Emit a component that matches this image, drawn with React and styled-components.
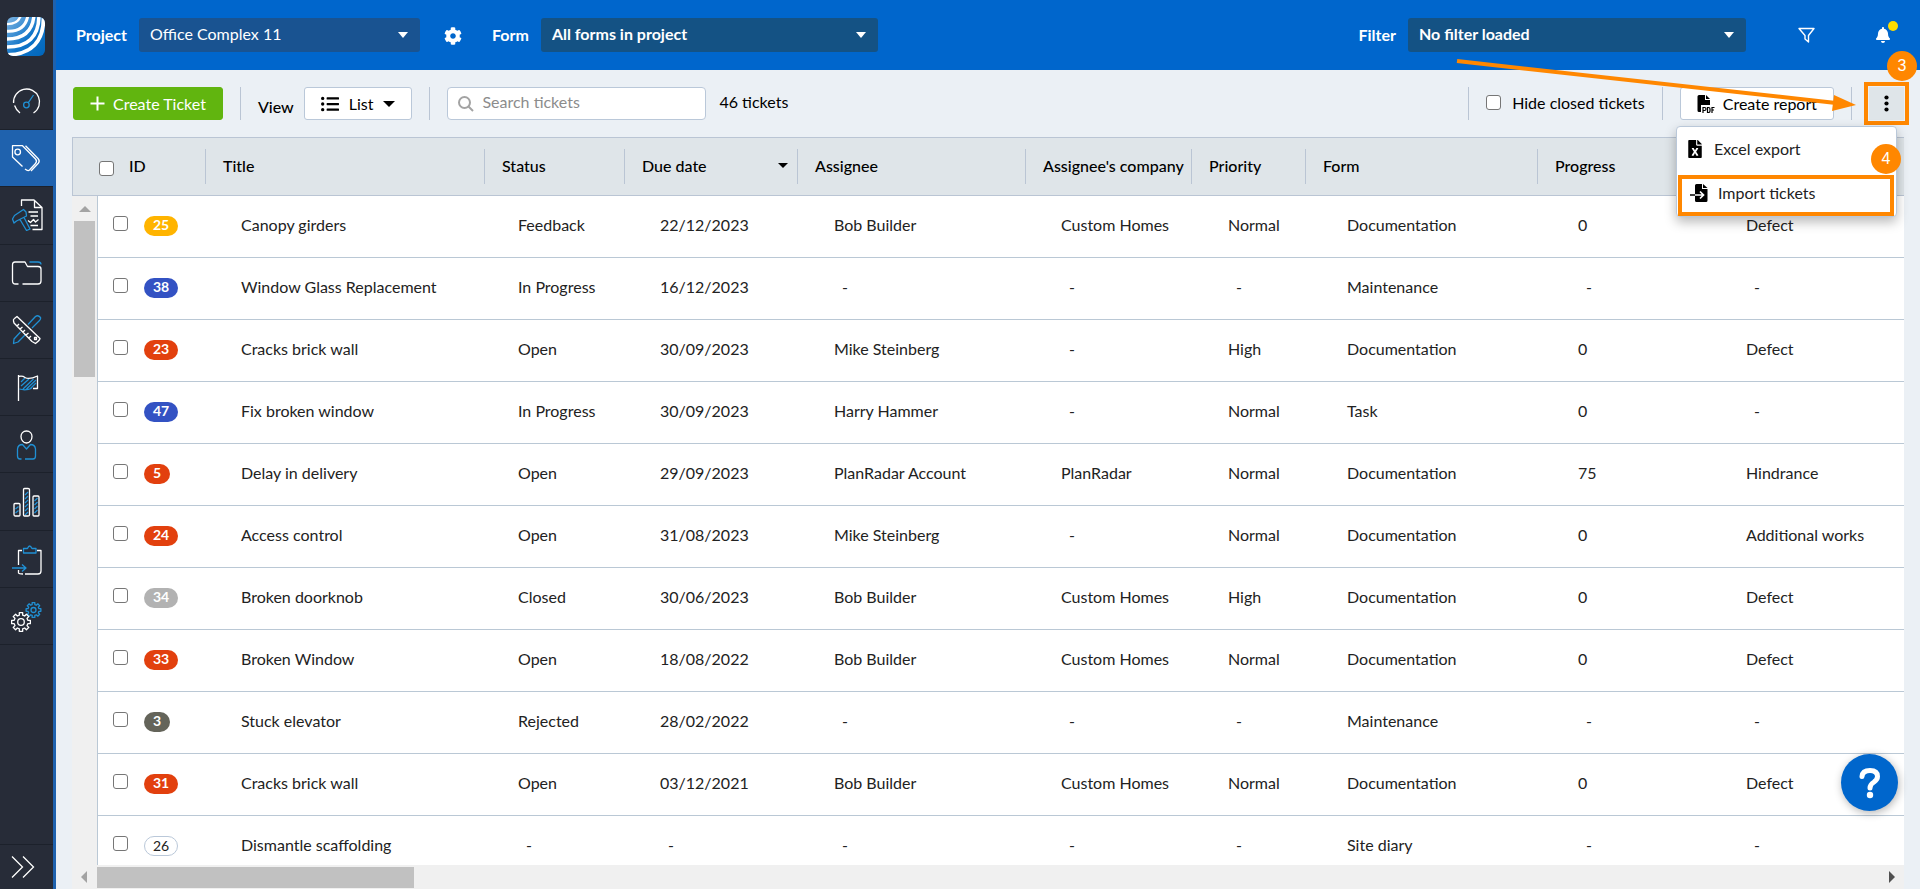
import { useState } from "react";
import styled, { createGlobalStyle } from "styled-components";
import { FaBell, FaCog, FaFileExcel, FaListUl } from "react-icons/fa";

const GlobalStyle = createGlobalStyle`
  * {
    box-sizing: border-box;
  }

  body {
    margin: 0;
    background-color: #ebf0f5;
    font-family: Lato, "Open Sans", sans-serif;
    font-size: 16px;
    line-height: 20px;
    color: #000000;
  }

  button,
  input,
  select {
    font: inherit;
    color: inherit;
  }
`;

const StyledPage = styled.div`
  display: flex;
  height: 100vh;
  overflow: hidden;
`;

const StyledSidebar = styled.nav`
  flex: none;
  width: 56px;
  display: flex;
  flex-direction: column;
  border-right: 3px solid #1f62ae;
  background-color: #272c38;
`;

const StyledLogo = styled.a`
  height: 73px;
  padding: 17px 7px;

  svg {
    display: block;
  }
`;

const StyledNavLinks = styled.div`
  flex: none;
  height: 572px;
  display: grid;
  grid-auto-rows: 1fr;
`;

const StyledNavLink = styled.a`
  padding-left: 11px;
  display: flex;
  align-items: center;
  border-bottom: 1px solid #1c212b;
  background-color: ${(props) => (props.$active ? "#1f62ae" : "transparent")};
`;

const StyledExpand = styled.button`
  height: 45px;
  margin-top: auto;
  padding: 4px 0 0 11px;
  border: 0;
  border-top: 1px solid #1c212b;
  background: none;
  text-align: left;
`;

const StyledMain = styled.main`
  flex: 1;
  min-width: 0;
  display: flex;
  flex-direction: column;
`;

const StyledTopBar = styled.header`
  flex: none;
  height: 70px;
  padding: 0 20px;
  display: flex;
  align-items: center;
  background-color: #0066cc;
  color: #ffffff;
`;

const StyledFieldLabel = styled.label`
  margin-right: 12px;
  font-weight: 700;
`;

const StyledSelectBox = styled.div`
  position: relative;
  width: ${(props) => props.$width};
  color: #ffffff;
`;

const StyledSelect = styled.select`
  width: 100%;
  height: 34px;
  padding: 0 40px 2px 11px;
  border: 0;
  border-radius: 3px;
  appearance: none;
  background-color: ${(props) => (props.$strong ? "#145284" : "#195391")};
  font-weight: ${(props) => (props.$strong ? 700 : 400)};
`;

const StyledSelectCaret = styled.span`
  position: absolute;
  top: 14px;
  right: 12px;
  pointer-events: none;
  border: 5px solid transparent;
  border-top: 6px solid currentColor;
  border-bottom: 0;
`;

const StyledCaret = styled.span`
  display: inline-block;
  border: ${(props) => props.$size || "5px"} solid transparent;
  border-top-color: currentColor;
  border-bottom: 0;
`;

const StyledIconButton = styled.button`
  width: 34px;
  height: 34px;
  padding: 0;
  position: relative;
  display: flex;
  align-items: center;
  justify-content: center;
  border: 0;
  background: none;
`;

const StyledSettingsButton = styled(StyledIconButton)`
  margin: 2px 22px 0 16px;
`;

const StyledTopActions = styled.div`
  display: flex;
  gap: 43px;
  margin-left: 43px;
`;

const StyledDot = styled.span`
  position: absolute;
  top: 3px;
  right: 2px;
  width: 10px;
  height: 10px;
  border-radius: 50%;
  background-color: #ffdd00;
`;

const StyledSpacer = styled.div`
  flex: 1;
`;

const StyledToolbar = styled.div`
  flex: none;
  height: 67px;
  padding: 0 16px 0 17px;
  display: flex;
  align-items: center;
`;

const StyledDivider = styled.span`
  width: 1px;
  height: 33px;
  margin: 0 17px;
  background-color: #bac5d4;
`;

const StyledButton = styled.button`
  height: 33px;
  padding: 0 16px;
  display: flex;
  align-items: center;
  gap: ${(props) => props.$gap || "8px"};
  border: 1px solid ${(props) => (props.$primary ? "#61b50f" : "#bac8d9")};
  border-radius: 3px;
  background-color: ${(props) => (props.$primary ? "#61b50f" : "#ffffff")};
  color: ${(props) => (props.$primary ? "#ffffff" : "#000000")};
  white-space: nowrap;
`;

const StyledViewLabel = styled.span`
  padding-top: 6px;
  margin-right: 10px;
  font-weight: 500;
`;

const StyledSearch = styled.label`
  width: 259px;
  height: 33px;
  padding: 0 10px;
  display: flex;
  align-items: center;
  gap: 8px;
  border: 1px solid #bac8d9;
  border-radius: 4px;
  background-color: #ffffff;
`;

const StyledSearchInput = styled.input`
  min-width: 0;
  flex: 1;
  padding: 0 0 4px;
  border: 0;
  outline: 0;
  background: none;

  &::placeholder {
    color: #8c8c8c;
  }
`;

const StyledCount = styled.span`
  margin-left: 13px;
  padding-bottom: 4px;
`;

const StyledCheckLabel = styled.label`
  display: flex;
  align-items: center;
  gap: 11px;
  padding-bottom: 2px;
  white-space: nowrap;
`;

const StyledCheckbox = styled.input`
  flex: none;
  width: 15px;
  height: 15px;
  margin: 0;
  vertical-align: top;
  appearance: none;
  border: 1px solid #767676;
  border-radius: 3px;
  background-color: #ffffff;

  &:checked {
    background-color: #0066cc;
  }
`;

const StyledMenuAnchor = styled.div`
  position: relative;
`;

const StyledKebab = styled.button`
  width: 35px;
  height: 33px;
  padding: 0;
  display: flex;
  align-items: center;
  justify-content: center;
  border: 0;
  background-color: #dfe5e9;
  outline: 4px solid #ff8700;
  outline-offset: 1px;
`;

const StyledMenu = styled.div`
  position: absolute;
  z-index: 2;
  top: 39px;
  right: 7px;
  width: 221px;
  padding: 0 2px 0 1px;
  border: 1px solid #bac8d9;
  border-radius: 4px;
  background-color: #ffffff;
  box-shadow: 0 5px 12px rgba(0, 0, 0, 0.28);
`;

const StyledMenuItem = styled.button`
  width: 100%;
  height: ${(props) => (props.$marked ? "41px" : "48px")};
  padding: 0 8px 5px;
  display: flex;
  align-items: center;
  gap: 10px;
  border: ${(props) => (props.$marked ? "4px solid #ff8700" : "0")};
  background: none;
  color: #222222;

  svg {
    color: #000000;
  }
`;

const StyledStep = styled.span`
  position: absolute;
  z-index: 3;
  top: ${(props) => props.$top};
  right: ${(props) => props.$right};
  width: 30px;
  height: 30px;
  display: flex;
  align-items: center;
  justify-content: center;
  border-radius: 50%;
  background-color: #ff8700;
  color: #ffffff;
  font-family: "Liberation Sans", Arial, sans-serif;
`;

const StyledArrow = styled.svg`
  position: absolute;
  z-index: 1;
  top: -30px;
  right: 48px;
  pointer-events: none;
`;

const StyledTableArea = styled.section`
  flex: 1;
  min-height: 0;
  margin: 0 16px;
  overflow: hidden;
  display: grid;
  grid-template-columns: 25px minmax(0, 1fr);
  grid-template-rows: 59px minmax(0, 1fr) 24px;
`;

const StyledTableView = styled.div`
  grid-column: 1 / -1;
  grid-row: 1 / 3;
  min-height: 0;
  overflow: hidden;
`;

const StyledTable = styled.table`
  width: 100%;
  table-layout: fixed;
  border-spacing: 0;
`;

const StyledHeadCell = styled.th`
  height: 59px;
  padding: 0;
  border: solid #bac5d4;
  border-width: 1px 0;
  background-color: #dfe5e9;
  font-weight: 500;
  text-align: left;
  white-space: nowrap;

  &:first-child {
    border-left-width: 1px;
  }
`;

const StyledHeadContent = styled.div`
  height: 35px;
  padding: 0 9px 2px 17px;
  display: flex;
  align-items: center;
  justify-content: space-between;
  border-left: 1px solid #bac5d4;
`;

const StyledIdHead = styled.label`
  display: flex;
  align-items: center;
  gap: 15px;
  padding: 0 0 2px 1px;

  input {
    margin-top: 5px;
  }
`;

const StyledCell = styled.td`
  height: 62px;
  padding: 0 0 4px ${(props) => props.$indent || "0"};
  border-bottom: 1px solid #bac8d5;
  background-color: #ffffff;
  color: #222222;
  white-space: nowrap;
`;

const StyledGutterCell = styled.td`
  padding: 0;
  border-right: 1px solid #bac8d5;
`;

const StyledDash = styled.span`
  padding-left: 8px;
`;

const StyledIdCell = styled.div`
  padding: 0 0 2px 15px;
  display: flex;
  align-items: center;
  gap: 16px;

  span {
    margin-top: 4px;
  }
`;

const StyledBadge = styled.span`
  height: 20px;
  padding: 0 ${(props) => (props.$color ? "9px" : "8px")} 2px;
  border: ${(props) => (props.$color ? "0" : "1px solid #bac8d9")};
  border-radius: 10px;
  background-color: ${(props) => props.$color || "#ffffff"};
  color: ${(props) => (props.$color ? "#ffffff" : "#222222")};
  font-size: 14px;
  line-height: 17px;
  font-weight: ${(props) => (props.$color ? 700 : 400)};
`;

const StyledVerticalTrack = styled.div`
  grid-column: 1;
  grid-row: 2;
  display: flex;
  flex-direction: column;
  align-items: center;
  gap: 9px;
  padding-top: 10px;
  background-color: #f0f0f0;
`;

const StyledVerticalThumb = styled.div`
  width: 21px;
  height: 156px;
  background-color: #c1c1c1;
`;

const StyledHorizontalTrack = styled.div`
  grid-column: 1 / -1;
  grid-row: 3;
  display: flex;
  align-items: center;
  padding: 0 9px;
  background-color: #f0f0f0;
`;

const StyledHorizontalThumb = styled.div`
  width: 317px;
  height: 21px;
  margin: 0 auto 0 10px;
  background-color: #c1c1c1;
`;

const StyledArrowHead = styled.span`
  width: 0;
  height: 0;
  border: 6px solid transparent;
  border-${(props) => props.$side}: 6px solid ${(props) => props.$color || "#a3a3a3"};
  border-${(props) => props.$hide}: 0;
`;

const StyledHelp = styled.button`
  position: fixed;
  right: 22px;
  bottom: 78px;
  width: 57px;
  height: 57px;
  padding: 0;
  display: flex;
  align-items: center;
  justify-content: center;
  border: 0;
  border-radius: 50%;
  background-color: #0066cc;
  color: #ffffff;
  box-shadow: 1px 2px 8px rgba(0, 0, 0, 0.3);
`;

const WHITE = "#ffffff";
const BLUE = "#2090d4";

const gearPath = (cx, cy, outer, inner) => {
  const points = [];
  for (let i = 0; i < 8; i += 1) {
    const base = (i * Math.PI) / 4;
    [
      [-0.24, inner],
      [-0.18, outer],
      [0.18, outer],
      [0.24, inner],
    ].forEach(([angle, radius]) => {
      const x = cx + radius * Math.cos(base + angle);
      const y = cy + radius * Math.sin(base + angle);
      points.push(`${x.toFixed(2)} ${y.toFixed(2)}`);
    });
  }
  return `M${points.join("L")}Z`;
};

const navItems = [
  {
    name: "Dashboard",
    white: "M9 28Q5 25 3.6 20.500M2.600 18A13 13 0 1 1 22.500 28",
    blue: "M17.200 17.800L22.500 10M18.200 20A2.800 2.800 0 1 1 12.600 20A2.800 2.800 0 1 1 18.200 20",
  },
  {
    name: "Tickets",
    active: true,
    white:
      "M11.500 24.500L1.500 15V3.700H11.500L24.500 17Q26.500 19 24.500 21.500L18.500 28Q17 29.500 14 27M14.500 3.700L27 16.500Q29.300 19 27.300 21.300L20 29M9.500 10A2.800 2.800 0 1 1 3.900 10A2.800 2.800 0 1 1 9.500 10",
  },
  {
    name: "Reports",
    white:
      "M10.500 7V1H23L31 8.500V30.500H21.500M23.500 1V8.500H31M17.500 13H27M19.500 17H27M17 21.500L19.500 23.500L22.500 20.500L24.500 23L27.500 20.500M19.500 26.500H27",
    blue: "M1.500 20L3.500 16.500L12.500 10.500L15 13L15.500 17L5.500 22L3 24ZM9 20.500L15.500 31.500L19 30L13 18.500",
  },
  {
    name: "Documents",
    white: "M7.500 27H4.500Q1.500 27 1.500 24V8Q1.500 5 4 5H14L16.500 9.500H27Q30 9.500 30 12V24Q30 27 27 27H11.500",
    blue: "M18.500 5H27Q30 5 30 7.500",
  },
  {
    name: "Plans",
    white:
      "M2.500 7Q2 5.500 3.500 4.500L6 2.500L29 24.500Q28.500 26.500 24.500 29.500L21 27.500L3 9ZM6 12L8 10M9 15L11.500 13M12 18L14 16M15 21L17.500 19M18 24L20 22M25.500 25.500H23.500V23.500H25.500Z",
    blue: "M17 10.500L24.500 2.500Q27 0.500 29.500 3.500Q30 5 28.500 6.500L21 14M9.500 18L3 25L2.500 29.500L7 28L14.500 20.500",
  },
  {
    name: "Milestones",
    white: "M7.500 4V30M7.500 5.500Q11.500 4.500 14 6.500Q18 9 26.500 5V17.500H22",
    blue: "M8.500 18Q15 20 21 17M10 11L14 7M10 15L18 8M12 18L22.500 8M15.500 18L25 9M19 18L25 12",
  },
  {
    name: "Contacts",
    white: "M21 8.500C21 11.500 19 15 15.500 15S10 11.500 10 8.500S12 3 15.500 3S21 5.500 21 8.500",
    blue: "M10.500 31H9Q6.500 31 6.500 28V21Q7 16.500 11.500 16.500L15.500 21L19.500 16.500Q24 16.500 24.500 21V28Q24.500 31 22 31H14",
  },
  {
    name: "Statistics",
    white:
      "M5 31H4Q3 31 3 29.500V19.500Q3 18.500 4 18.500H8Q9 18.500 9 19.500V30Q9 31 8 31ZM13.500 31Q12.500 31 12.500 30V4.500Q12.500 3.500 13.500 3.500H17Q18.500 3.500 18.500 4.500V30Q18.500 31 17 31ZM23 31Q22 31 22 30V12Q22 11 23 11H27Q28 11 28 12V30Q28 31 27 31Z",
    blue: "M4.500 24L7.500 21.500M4.500 28L7.500 25.500M14 10L17 7M14 14L17 11M14 18L17 15M14 22L17 19M14 26L17 23M14 30L17 27M23.500 16L26.500 13M23.500 20L26.500 17M23.500 24L26.500 21M23.500 28L26.500 25",
  },
  {
    name: "Handover",
    white: "M11 7.500H7.500V22M7.500 27V30Q8 31 12 31M14 31H27Q30 31 30 28V7.500H26",
    blue: "M12.500 10V5.500H16.500Q18.500 0.500 21 5.500H25V10ZM1 25H15M11 21.500L15 25L11 28.500",
  },
  {
    name: "Settings",
    white: `${gearPath(10, 22, 9.5, 7)}M13.300 22A3.300 3.300 0 1 1 6.700 22A3.300 3.300 0 1 1 13.300 22`,
    blue: `${gearPath(22.5, 10, 7.5, 5.6)}M25 10A2.500 2.500 0 1 1 20 10A2.500 2.500 0 1 1 25 10`,
  },
];

const columns = [
  { name: "Title", key: "title", width: 279, indent: "36px" },
  { name: "Status", key: "status", width: 140, indent: "34px" },
  { name: "Due date", key: "due", width: 173, indent: "36px", sorted: true },
  { name: "Assignee", key: "assignee", width: 228, indent: "37px" },
  { name: "Assignee's company", key: "company", width: 166, indent: "36px" },
  { name: "Priority", key: "priority", width: 114, indent: "37px" },
  { name: "Form", key: "form", width: 232, indent: "42px" },
  { name: "Progress", key: "progress", width: 168, indent: "41px" },
  { name: "Type", key: "type", indent: "41px" },
];

const YELLOW_BADGE = "#ffb400";
const BLUE_BADGE = "#3352c3";
const RED_BADGE = "#e2400e";

const tickets = [
  { id: 25, color: YELLOW_BADGE, title: "Canopy girders", status: "Feedback", due: "22/12/2023", assignee: "Bob Builder", company: "Custom Homes", priority: "Normal", form: "Documentation", progress: "0", type: "Defect" },
  { id: 38, color: BLUE_BADGE, title: "Window Glass Replacement", status: "In Progress", due: "16/12/2023", form: "Maintenance" },
  { id: 23, color: RED_BADGE, title: "Cracks brick wall", status: "Open", due: "30/09/2023", assignee: "Mike Steinberg", priority: "High", form: "Documentation", progress: "0", type: "Defect" },
  { id: 47, color: BLUE_BADGE, title: "Fix broken window", status: "In Progress", due: "30/09/2023", assignee: "Harry Hammer", priority: "Normal", form: "Task", progress: "0" },
  { id: 5, color: RED_BADGE, title: "Delay in delivery", status: "Open", due: "29/09/2023", assignee: "PlanRadar Account", company: "PlanRadar", priority: "Normal", form: "Documentation", progress: "75", type: "Hindrance" },
  { id: 24, color: RED_BADGE, title: "Access control", status: "Open", due: "31/08/2023", assignee: "Mike Steinberg", priority: "Normal", form: "Documentation", progress: "0", type: "Additional works" },
  { id: 34, color: "#b2b2b2", title: "Broken doorknob", status: "Closed", due: "30/06/2023", assignee: "Bob Builder", company: "Custom Homes", priority: "High", form: "Documentation", progress: "0", type: "Defect" },
  { id: 33, color: RED_BADGE, title: "Broken Window", status: "Open", due: "18/08/2022", assignee: "Bob Builder", company: "Custom Homes", priority: "Normal", form: "Documentation", progress: "0", type: "Defect" },
  { id: 3, color: "#64645a", title: "Stuck elevator", status: "Rejected", due: "28/02/2022", form: "Maintenance" },
  { id: 31, color: RED_BADGE, title: "Cracks brick wall", status: "Open", due: "03/12/2021", assignee: "Bob Builder", company: "Custom Homes", priority: "Normal", form: "Documentation", progress: "0", type: "Defect" },
  { id: 26, title: "Dismantle scaffolding", form: "Site diary" },
];

const Logo = () => (
  <svg width="38" height="39" viewBox="0 0 38 39">
    <defs>
      <clipPath id="logo-shape">
        <rect width="38" height="39" rx="6" />
      </clipPath>
      <linearGradient id="logo-blue" x1="0" y1="0" x2="1" y2="1">
        <stop offset="0" stopColor="#7fb5e2" />
        <stop offset="0.550" stopColor="#0f74c8" />
        <stop offset="1" stopColor="#0066bb" />
      </linearGradient>
    </defs>
    <g clipPath="url(#logo-shape)">
      <rect width="38" height="39" fill="url(#logo-blue)" />
      <g fill="none" stroke={WHITE}>
        <path d="M-2 7Q11 8 14 -2" strokeWidth="2.400" />
        <path d="M-2 14Q18 16 21 -2" strokeWidth="3" />
        <path d="M-2 22Q25 23 27 -2" strokeWidth="3.400" />
        <path d="M-2 30Q32 31 32 -2" strokeWidth="3.600" />
        <path d="M-2 38Q38 38 36.500 -2" strokeWidth="3.800" />
      </g>
    </g>
  </svg>
);

const LineIcon = ({ white, blue }) => (
  <svg width="32" height="32" viewBox="0 0 32 32" fill="none" strokeWidth="1.300" strokeLinejoin="round">
    {blue && <path d={blue} stroke={BLUE} />}
    <path d={white} stroke={WHITE} />
  </svg>
);

const PlusIcon = () => (
  <svg width="15" height="15" viewBox="0 0 15 15" stroke={WHITE} strokeWidth="2">
    <path d="M7.500 0.500V14.500M0.500 7.500H14.500" />
  </svg>
);

const SearchIcon = () => (
  <svg width="16" height="16" viewBox="0 0 16 16" fill="none" stroke="#a3a3a3" strokeWidth="2">
    <circle cx="6.500" cy="6.500" r="5.500" />
    <path d="M10.500 10.500L15 15" />
  </svg>
);

const FunnelIcon = () => (
  <svg width="17" height="16" viewBox="0 0 17 16" fill="none" stroke={WHITE} strokeWidth="1.400" strokeLinejoin="round">
    <path d="M1 1.500H16L10.500 8.500V15L7 12V8.500Z" />
  </svg>
);

const PdfIcon = () => (
  <svg width="18" height="18" viewBox="0 0 18 18">
    <path d="M2 0H8V5H13V10H4V17H2Q0.500 17 0.500 15.500V1.500Q0.500 0 2 0ZM9 0L13 4H9Z" fill="#000000" />
    <path
      d="M6 18V12.500H7.500Q9 12.500 9 14T7.500 15.500H6M10.500 12.500V17.500H11.500Q13 17.500 13 16V14Q13 12.500 11.500 12.500ZM15 18V12.500H17.500M15 15H17"
      fill="none"
      stroke="#000000"
      strokeWidth="1.200"
    />
  </svg>
);

const ImportIcon = () => (
  <svg width="18" height="18" viewBox="0 0 18 18">
    <path d="M6.500 0H12V5H17.500V16.500Q17.500 18 16 18H6.500Q5 18 5 16.500V1.500Q5 0 6.500 0ZM13 0L17.500 4H13Z" fill="#000000" />
    <path d="M0 11H5" stroke="#000000" strokeWidth="1.500" />
    <path d="M5 11H13M10 7.500L13.500 11L10 14.500" fill="none" stroke={WHITE} strokeWidth="1.700" />
  </svg>
);

const KebabIcon = () => (
  <svg width="5" height="17" viewBox="0 0 5 17">
    <circle cx="2.500" cy="2.500" r="2.100" />
    <circle cx="2.500" cy="8.500" r="2.100" />
    <circle cx="2.500" cy="14.500" r="2.100" />
  </svg>
);

const HelpIcon = () => (
  <svg width="22" height="32" viewBox="0 0 22 32">
    <path
      d="M3 9.500Q3.500 3.500 11 3.500Q18.500 3.500 18.500 9.500Q18.500 12.500 15 15Q11 17.500 11 21"
      fill="none"
      stroke={WHITE}
      strokeWidth="5"
      strokeLinecap="round"
    />
    <circle cx="11" cy="28" r="3.200" fill={WHITE} />
  </svg>
);

const Select = (props) => {
  const { id, value, width, strong } = props;

  return (
    <StyledSelectBox $width={width}>
      <StyledSelect id={id} $strong={strong} defaultValue={value}>
        <option>{value}</option>
      </StyledSelect>
      <StyledSelectCaret />
    </StyledSelectBox>
  );
};

const Sidebar = () => (
  <StyledSidebar>
    <StyledLogo href="#" aria-label="Home">
      <Logo />
    </StyledLogo>
    <StyledNavLinks>
      {navItems.map((item) => (
        <StyledNavLink key={item.name} href="#" aria-label={item.name} $active={item.active}>
          <LineIcon white={item.white} blue={item.blue} />
        </StyledNavLink>
      ))}
    </StyledNavLinks>
    <StyledExpand aria-label="Expand">
      <svg width="24" height="22" viewBox="0 0 24 22" fill="none" stroke={WHITE} strokeWidth="1.300">
        <path d="M1 0.500L11.500 11L1 21.500M12 0.500L22.500 11L12 21.500" />
      </svg>
    </StyledExpand>
  </StyledSidebar>
);

const TopBar = () => (
  <StyledTopBar>
    <StyledFieldLabel htmlFor="project">Project</StyledFieldLabel>
    <Select id="project" value="Office Complex 11" width="281px" />
    <StyledSettingsButton aria-label="Project settings">
      <FaCog size={18} />
    </StyledSettingsButton>
    <StyledFieldLabel htmlFor="form">Form</StyledFieldLabel>
    <Select id="form" value="All forms in project" width="337px" strong />
    <StyledSpacer />
    <StyledFieldLabel htmlFor="filter">Filter</StyledFieldLabel>
    <Select id="filter" value="No filter loaded" width="338px" strong />
    <StyledTopActions>
      <StyledIconButton aria-label="Filter">
        <FunnelIcon />
      </StyledIconButton>
      <StyledIconButton aria-label="Notifications">
        <FaBell size={16} />
        <StyledDot />
      </StyledIconButton>
    </StyledTopActions>
  </StyledTopBar>
);

const ActionsMenu = () => {
  const [open, setOpen] = useState(true);

  return (
    <StyledMenuAnchor>
      <StyledKebab aria-label="More actions" onClick={() => setOpen(!open)}>
        <KebabIcon />
      </StyledKebab>
      <StyledArrow width="400" height="60" viewBox="0 0 400 60">
        <path d="M1 4L380 46" stroke="#ff8700" strokeWidth="4" />
        <path d="M378 38L400 48L376 54Z" fill="#ff8700" />
      </StyledArrow>
      <StyledStep $top="-36px" $right="-13px">
        3
      </StyledStep>
      {open && (
        <StyledMenu>
          <StyledMenuItem>
            <FaFileExcel size={18} />
            Excel export
          </StyledMenuItem>
          <StyledMenuItem $marked>
            <ImportIcon />
            Import tickets
          </StyledMenuItem>
          <StyledStep $top="17px" $right="-5px">
            4
          </StyledStep>
        </StyledMenu>
      )}
    </StyledMenuAnchor>
  );
};

const Toolbar = () => (
  <StyledToolbar>
    <StyledButton $primary>
      <PlusIcon />
      Create Ticket
    </StyledButton>
    <StyledDivider />
    <StyledViewLabel>View</StyledViewLabel>
    <StyledButton $gap="10px">
      <FaListUl size={18} />
      List
      <StyledCaret $size="6px" />
    </StyledButton>
    <StyledDivider />
    <StyledSearch>
      <SearchIcon />
      <StyledSearchInput type="text" placeholder="Search tickets" aria-label="Search tickets" />
    </StyledSearch>
    <StyledCount>46 tickets</StyledCount>
    <StyledSpacer />
    <StyledDivider />
    <StyledCheckLabel>
      <StyledCheckbox type="checkbox" />
      Hide closed tickets
    </StyledCheckLabel>
    <StyledDivider />
    <StyledButton>
      <PdfIcon />
      Create report
    </StyledButton>
    <StyledDivider />
    <ActionsMenu />
  </StyledToolbar>
);

const TicketTable = () => (
  <StyledTable>
    <colgroup>
      <col width="26" />
      <col width="107" />
      {columns.map((column) => (
        <col key={column.key} width={column.width} />
      ))}
    </colgroup>
    <thead>
      <tr>
        <StyledHeadCell />
        <StyledHeadCell>
          <StyledIdHead>
            <StyledCheckbox type="checkbox" />
            ID
          </StyledIdHead>
        </StyledHeadCell>
        {columns.map((column) => (
          <StyledHeadCell key={column.key}>
            <StyledHeadContent>
              {column.name}
              {column.sorted && <StyledCaret />}
            </StyledHeadContent>
          </StyledHeadCell>
        ))}
      </tr>
    </thead>
    <tbody>
      {tickets.map((ticket) => (
        <tr key={ticket.id}>
          <StyledGutterCell />
          <StyledCell>
            <StyledIdCell>
              <StyledCheckbox type="checkbox" aria-label={`Select ticket ${ticket.id}`} />
              <StyledBadge $color={ticket.color}>{ticket.id}</StyledBadge>
            </StyledIdCell>
          </StyledCell>
          {columns.map((column) => (
            <StyledCell key={column.key} $indent={column.indent}>
              {ticket[column.key] || <StyledDash>-</StyledDash>}
            </StyledCell>
          ))}
        </tr>
      ))}
    </tbody>
  </StyledTable>
);

const App = () => (
  <StyledPage>
    <GlobalStyle />
    <Sidebar />
    <StyledMain>
      <TopBar />
      <Toolbar />
      <StyledTableArea>
        <StyledTableView>
          <TicketTable />
        </StyledTableView>
        <StyledVerticalTrack>
          <StyledArrowHead $side="bottom" $hide="top" />
          <StyledVerticalThumb />
        </StyledVerticalTrack>
        <StyledHorizontalTrack>
          <StyledArrowHead $side="right" $hide="left" />
          <StyledHorizontalThumb />
          <StyledArrowHead $side="left" $hide="right" $color="#505050" />
        </StyledHorizontalTrack>
      </StyledTableArea>
    </StyledMain>
    <StyledHelp aria-label="Help">
      <HelpIcon />
    </StyledHelp>
  </StyledPage>
);

export default App;
